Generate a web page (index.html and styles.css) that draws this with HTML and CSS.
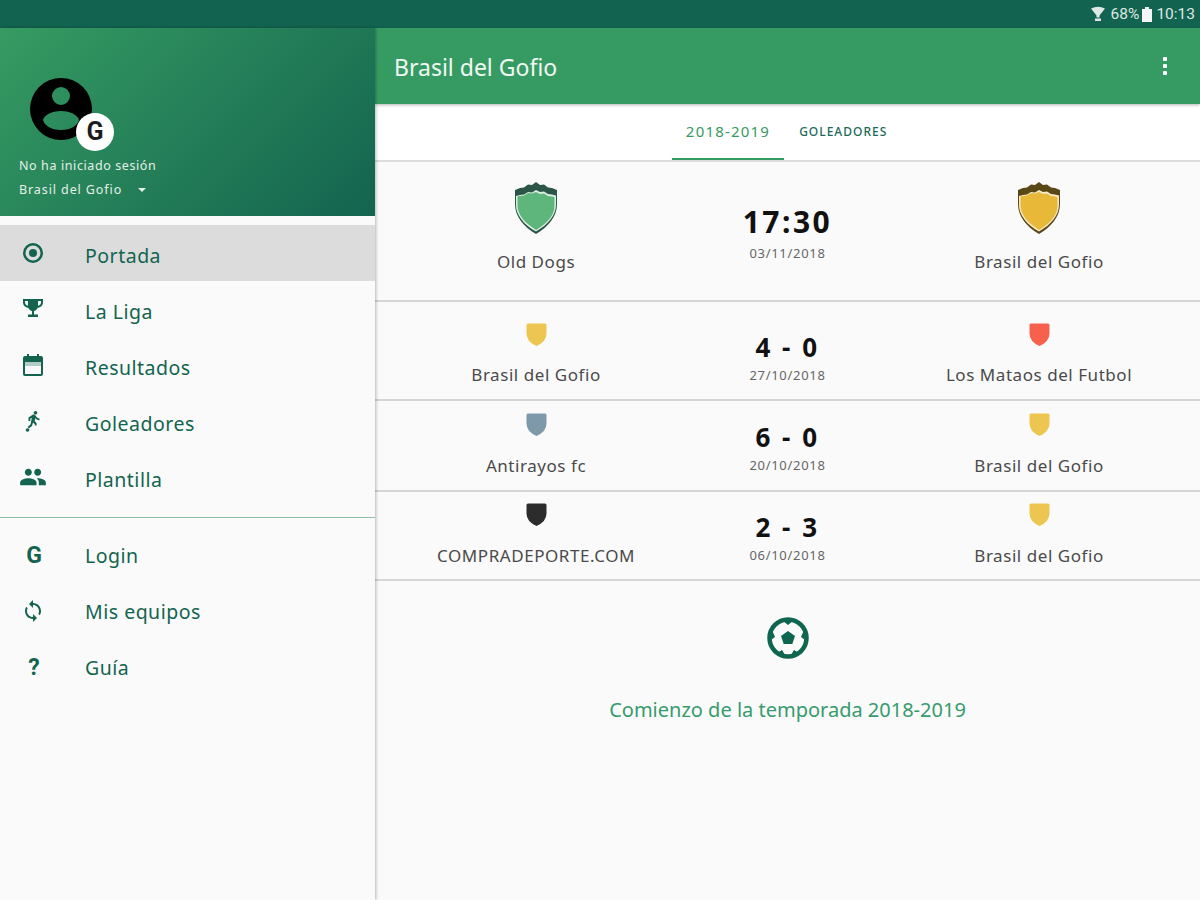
FILE: index.html
```html
<!DOCTYPE html>
<html lang="es">
<head>
  <meta charset="UTF-8">
  <title>Brasil del Gofio</title>
  <link rel="stylesheet" href="styles.css">
</head>
<body>
  <svg class="defs" width="0" height="0">
    <symbol id="crest" viewBox="0 0 21 23"><path d="M.5 2Q.5 .5 2 .5h17q1.500 0 1.500 1.500v8.500q0 8-10 12.500Q.5 18.500 .5 10.500z"/></symbol>
  </svg>

  <div id="status-bar">
    <svg class="wifi" width="14" height="16" viewBox="0 0 14 16"><path d="M0 2.500Q7-1 14 2.500L8.500 9.500v2h-3v-2z" fill="#dfe8e4"/><rect x="4" y="12.500" width="6" height="2.500" fill="#dfe8e4"/></svg>
    <span class="pct">68%</span>
    <svg class="batt" width="10" height="15" viewBox="0 0 10 15"><path d="M3 0h4v2h3v13H0V2h3z" fill="#f4f7f6"/></svg>
    <span class="clock">10:13</span>
  </div>

  <div id="app">
    <!-- Drawer -->
    <aside id="drawer">
      <div id="drawer-header">
        <div class="avatar">
          <svg width="62" height="62" viewBox="0 0 62 62"><path fill-rule="evenodd" d="M31 0a31 31 0 1 0 0 62a31 31 0 1 0 0-62zM31 9a9 9 0 1 1 0 18a9 9 0 1 1 0-18zM31 33c10 0 17 4.500 18 9c-1 5-8 10-18 10s-17-5-18-10c1-4.500 8-9 18-9z"/></svg>
          <span class="g-badge">G</span>
        </div>
        <div class="session">No ha iniciado sesión</div>
        <div class="team-select">Brasil del Gofio <span class="caret"></span></div>
      </div>

      <ul class="menu main-menu">
        <li class="active">
          <svg class="ic" viewBox="0 0 24 24"><path fill-rule="evenodd" d="M12 2a10 10 0 1 0 0 20a10 10 0 1 0 0-20zM12 4.500a7.500 7.500 0 1 1 0 15a7.500 7.500 0 1 1 0-15z"/><circle cx="12" cy="12" r="4"/></svg>
          <span>Portada</span>
        </li>
        <li>
          <svg class="ic" viewBox="0 0 24 24"><path fill-rule="evenodd" d="M2 2h20v3.500c0 3-2.500 5-5.500 5.500c-.8 1.700-2 2.700-3.500 3v3.500h4V20H7v-2.500h4V14c-1.500-.3-2.700-1.300-3.500-3C4.500 10.500 2 8.500 2 5.500zM4 4v1.500c0 1.500 1 2.700 3 3.200V4zM20 4h-3v4.700c2-.5 3-1.700 3-3.200z"/></svg>
          <span>La Liga</span>
        </li>
        <li>
          <svg class="ic" viewBox="0 0 24 24"><path fill-rule="evenodd" d="M6 1h2v2h8V1h2v2h2a2 2 0 0 1 2 2v16a2 2 0 0 1-2 2H4a2 2 0 0 1-2-2V5a2 2 0 0 1 2-2h2zM4 9v12h16V9z"/><rect x="4" y="9" width="16" height="4" opacity=".3"/></svg>
          <span>Resultados</span>
        </li>
        <li>
          <svg class="ic" viewBox="0 0 24 24"><path d="M14.500 5.500c1 0 1.800-.8 1.800-1.800s-.8-1.800-1.800-1.800-1.800.8-1.800 1.800.8 1.800 1.800 1.800zM11 17l1-3.500 1.800 1.800v1.200h1.800v-2.200l-1.900-2.200.6-2.800c1 1.200 2.500 2 4.200 2v-1.800c-1.500 0-2.700-.8-3.300-1.900l-.9-1.400c-.3-.5-.9-.8-1.500-.8-.3 0-.5.100-.8.200L7.500 8.500v3.500h1.800V9.500l1.500-.6-1.300 6.600-2.900 2.500 1.200 1.400z"/><circle cx="6.500" cy="21" r="1.800"/></svg>
          <span>Goleadores</span>
        </li>
        <li>
          <svg class="ic ic-wide" viewBox="0 0 24 24"><path d="M16 11c1.660 0 2.990-1.340 2.990-3S17.660 5 16 5c-1.660 0-3 1.340-3 3s1.340 3 3 3zm-8 0c1.660 0 2.990-1.340 2.990-3S9.660 5 8 5C6.340 5 5 6.340 5 8s1.340 3 3 3zm0 2c-2.330 0-7 1.170-7 3.500V19h14v-2.500c0-2.330-4.670-3.500-7-3.500zm8 0c-.290 0-.620.020-.970.050 1.160.840 1.970 1.970 1.970 3.450V19h6v-2.500c0-2.330-4.670-3.500-7-3.500z"/></svg>
          <span>Plantilla</span>
        </li>
      </ul>

      <div class="menu-sep"></div>

      <ul class="menu extra-menu">
        <li><b class="ic-text">G</b><span>Login</span></li>
        <li>
          <svg class="ic" viewBox="0 0 24 24"><path d="M12 4V1L8 5l4 4V6c3.310 0 6 2.690 6 6 0 1.010-.250 1.970-.700 2.800l1.460 1.460C19.540 15.030 20 13.570 20 12c0-4.420-3.580-8-8-8zm0 14c-3.310 0-6-2.690-6-6 0-1.010.250-1.970.700-2.800L5.240 7.740C4.460 8.970 4 10.430 4 12c0 4.420 3.580 8 8 8v3l4-4-4-4v3z"/></svg>
          <span>Mis equipos</span>
        </li>
        <li><b class="ic-text">?</b><span>Guía</span></li>
      </ul>
    </aside>

    <!-- Content -->
    <main id="content">
      <header id="app-bar">
        <h1>Brasil del Gofio</h1>
        <div class="more"><i></i><i></i><i></i></div>
      </header>

      <nav id="tabs">
        <a class="tab active">2018-2019</a>
        <a class="tab small">GOLEADORES</a>
      </nav>

      <section class="match next">
        <div class="team">
          <svg class="crest-big" width="44" height="52" viewBox="0 0 44 52"><path d="M22 0l4 3 4-.500 4 3 4 .500 5 2v14C43 35 34 45 22 52 10 45 1 35 1 22V8l5-2 4-.500 4-3 4 .500z" fill="#2b5546"/><path d="M22 8l4 2 4-.500 4 2.500 4 .500 4 1v9c0 11-8 20-20 27C10 43 2 33 2 23v-9l4-1 4-.500 4-2.500 4 .500z" fill="#dbeee2"/><path d="M22 10l4 2 4-.500 4 2.500 4 .500 2.500.500v8.500c0 10-7.500 18-18.500 24.500C11 41 3.500 33 3.500 23v-8.500L6 14l4-.500 4-2.500 4 .500z" fill="#5fb67c"/></svg>
          <div class="name">Old Dogs</div>
        </div>
        <div class="score">
          <div class="time">17:30</div>
          <div class="date">03/11/2018</div>
        </div>
        <div class="team">
          <svg class="crest-big" width="44" height="52" viewBox="0 0 44 52"><path d="M22 0l4 3 4-.500 4 3 4 .500 5 2v14C43 35 34 45 22 52 10 45 1 35 1 22V8l5-2 4-.500 4-3 4 .500z" fill="#5a4716"/><path d="M22 8l4 2 4-.500 4 2.500 4 .500 4 1v9c0 11-8 20-20 27C10 43 2 33 2 23v-9l4-1 4-.500 4-2.500 4 .500z" fill="#f5ebc8"/><path d="M22 10l4 2 4-.500 4 2.500 4 .500 2.500.500v8.500c0 10-7.500 18-18.500 24.500C11 41 3.500 33 3.500 23v-8.500L6 14l4-.500 4-2.500 4 .500z" fill="#e8b838"/></svg>
          <div class="name">Brasil del Gofio</div>
        </div>
      </section>

      <section class="match r1">
        <div class="team"><svg class="crest yellow"><use href="#crest"/></svg><div class="name">Brasil del Gofio</div></div>
        <div class="score"><div class="goals">4 - 0</div><div class="date">27/10/2018</div></div>
        <div class="team"><svg class="crest red"><use href="#crest"/></svg><div class="name">Los Mataos del Futbol</div></div>
      </section>

      <section class="match r2">
        <div class="team"><svg class="crest slate"><use href="#crest"/></svg><div class="name">Antirayos fc</div></div>
        <div class="score"><div class="goals">6 - 0</div><div class="date">20/10/2018</div></div>
        <div class="team"><svg class="crest yellow"><use href="#crest"/></svg><div class="name">Brasil del Gofio</div></div>
      </section>

      <section class="match r3">
        <div class="team"><svg class="crest dark"><use href="#crest"/></svg><div class="name">COMPRADEPORTE.COM</div></div>
        <div class="score"><div class="goals">2 - 3</div><div class="date">06/10/2018</div></div>
        <div class="team"><svg class="crest yellow"><use href="#crest"/></svg><div class="name">Brasil del Gofio</div></div>
      </section>

      <section class="season">
        <svg width="42" height="42" viewBox="0 0 42 42"><circle cx="21" cy="21" r="18.500" fill="none" stroke="#0f6650" stroke-width="4.500"/><path d="M21 14l7 5-2.700 8h-8.600L14 19z" fill="#0f6650"/><path d="M16 4h10l-5 4zM37 13l1 10-4-3zM32 36l-8 2 3-5zM10 36l8 2-3-5zM5 13l-1 10 4-3z" fill="#0f6650"/></svg>
        <p>Comienzo de la temporada 2018-2019</p>
      </section>
    </main>
  </div>
</body>
</html>
```

FILE: styles.css
```css
/* ====== Page ====== */
html, body {
  margin: 0;
  height: 900px;
  overflow: hidden;
  background: #fafafa;
  font-family: "Noto Sans", sans-serif;
}
.defs { position: absolute; }

/* ====== Status bar ====== */
#status-bar {
  height: 28px;
  background: #12634f;
  color: #dfe8e4;
  display: flex;
  align-items: center;
  justify-content: flex-end;
  padding-right: 5px;
  font-family: "Roboto", sans-serif;
  font-size: 15.500px;
}
.wifi { margin-right: 6px; }
.batt { margin: 0 4px 0 3px; }

#app {
  display: flex;
  height: 872px;
}

/* ====== Drawer ====== */
#drawer {
  width: 375px;
  flex: none;
  background: #fafafa;
  box-shadow: 1px 0 3px rgba(0, 0, 0, 0.28);
  position: relative;
  z-index: 2;
}
#drawer-header {
  height: 188px;
  box-sizing: border-box;
  padding: 50px 0 0 19px;
  background: linear-gradient(135deg, #369b62, #13644f);
  color: #e4f0e9;
  font-size: 12.500px;
}
.avatar {
  position: relative;
  width: 62px;
  height: 62px;
  margin-left: 11px;
  margin-bottom: 17px;
}
.avatar svg { display: block; }
.g-badge {
  position: absolute;
  left: 46px;
  top: 35px;
  width: 38px;
  height: 38px;
  border-radius: 50%;
  background: #fff;
  color: #1c1c1c;
  font: 700 25px/38px "Roboto", sans-serif;
  text-align: center;
}
.session { height: 24px; line-height: 17px; letter-spacing: 0.6px; }
.team-select { line-height: 17px; letter-spacing: 0.9px; }
.caret {
  display: inline-block;
  margin-left: 12px;
  vertical-align: 2px;
  border: 4px solid transparent;
  border-top-color: #e4f0e9;
  border-bottom: 0;
}

.menu {
  list-style: none;
  margin: 0;
  padding: 0;
  color: #12644f;
}
.main-menu { padding-top: 9px; }
.menu li {
  height: 56px;
  display: flex;
  align-items: center;
  font-size: 19.500px;
}
.menu li span { margin-left: 40px; letter-spacing: 0.5px; }
.main-menu li span { margin-top: 4px; }
.extra-menu li span { margin-top: -2px; }
.menu li.active { background: #dcdcdc; }
.ic {
  width: 24px;
  height: 24px;
  margin: 0 0 0 21px;
  fill: #12644f;
}
.extra-menu .ic { margin-top: -2px; }
.ic-wide {
  width: 28px;
  height: 28px;
  margin-left: 19px;
  margin-right: -2px;
}
.ic-text {
  width: 24px;
  margin: -2px 0 0 22px;
  margin-right: -1px;
  text-align: center;
  font: 700 23px "Roboto", sans-serif;
}
.menu-sep {
  height: 1px;
  margin: 12px 0 10px;
  background: #8fc0a5;
}

/* ====== Main content ====== */
#content {
  flex: 1;
  min-width: 0;
}
#app-bar {
  height: 76px;
  background: #369b62;
  box-shadow: 0 1px 3px rgba(0, 0, 0, 0.3);
  display: flex;
  align-items: center;
  justify-content: space-between;
  padding: 0 33px 0 19px;
  position: relative;
}
#app-bar h1 {
  margin: 2px 0 0;
  color: #f1f8f4;
  font-size: 23px;
  font-weight: 400;
}
.more {
  display: flex;
  flex-direction: column;
  gap: 3px;
}
.more i {
  width: 4px;
  height: 4px;
  background: #fff;
  border-radius: 1px;
}

#tabs {
  height: 56px;
  background: #fff;
  border-bottom: 2px solid #dcdcdc;
  display: flex;
  justify-content: center;
}
.tab {
  display: flex;
  align-items: center;
  height: 56px;
  box-sizing: border-box;
  padding: 0 14px;
  font-size: 15px;
  letter-spacing: 1.2px;
  color: #369b62;
  border-bottom: 2px solid #369b62;
}
.tab.small {
  padding: 0 0 0 15px;
  align-items: flex-start;
  line-height: 56px;
  font-size: 12px;
  font-weight: 500;
  letter-spacing: 1px;
  color: #1d6a58;
  border-bottom: 0;
  width: 119px;
}

.match {
  display: grid;
  grid-template-columns: 322px 1fr 322px;
  box-sizing: border-box;
  border-bottom: 2px solid #d6d6d6;
  text-align: center;
}
.match.next { height: 140px; }
.match.r1 { height: 99px; }
.match.r2 { height: 91px; }
.match.r3 { height: 89px; }
.team {
  display: flex;
  flex-direction: column;
  align-items: center;
}
.name {
  font-size: 17px;
  line-height: 22px;
  letter-spacing: 0.55px;
  color: #4a4a4a;
}
.next .team { padding-top: 20px; }
.next .name { margin-top: 17px; }
.crest-big { display: block; }
.crest {
  width: 21px;
  height: 23px;
  margin-bottom: 18px;
}
.r1 .team { padding-top: 21px; }
.r2 .team { padding-top: 12px; }
.r3 .team { padding-top: 11px; }
.r2 .crest, .r3 .crest { margin-bottom: 19px; }
.crest.yellow { fill: #ecc650; }
.crest.red { fill: #f8604e; }
.crest.slate { fill: #7e9aaa; }
.crest.dark { fill: #2c2c2c; }

.score { color: #111; }
.time {
  margin-top: 41px;
  font-size: 30px;
  line-height: 38px;
  font-weight: 700;
  letter-spacing: 2.5px;
}
.goals {
  font-size: 26px;
  line-height: 34px;
  font-weight: 700;
  letter-spacing: 2.5px;
}
.r1 .goals { margin-top: 28px; }
.r2 .goals { margin-top: 19px; }
.r3 .goals { margin-top: 18px; }
.date {
  margin-top: 3px;
  font-size: 13px;
  line-height: 16px;
  letter-spacing: 0.7px;
  color: #666;
}
.next .date { margin-top: 4px; }

.season {
  text-align: center;
  padding-top: 36px;
}
.season svg { display: block; margin: 0 auto; }
.season p {
  margin: 37px 0 0;
  font-size: 20px;
  line-height: 28px;
  color: #369b6e;
}
```
